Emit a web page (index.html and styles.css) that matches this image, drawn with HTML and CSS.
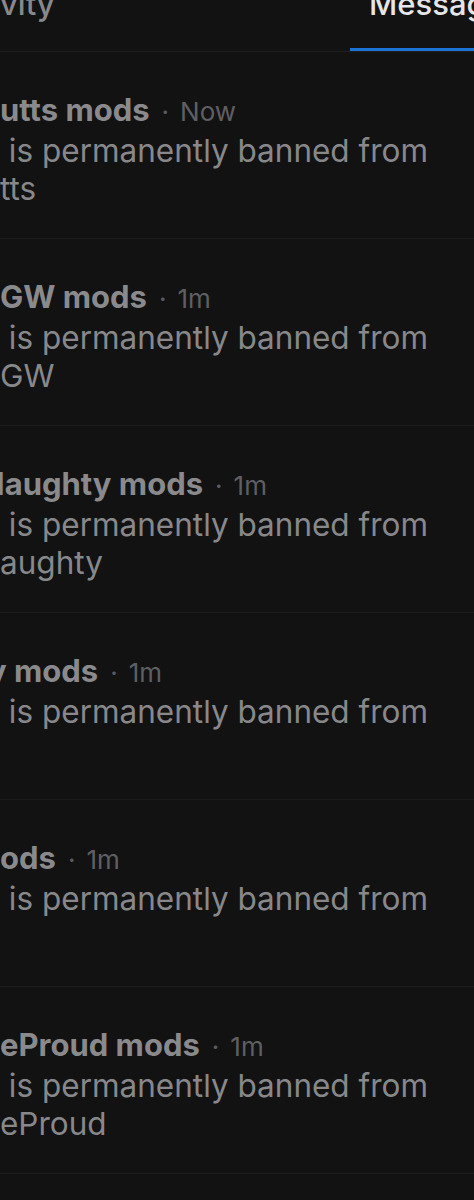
FILE: index.html
```html
<!DOCTYPE html>
<html lang="en">
<head>
    <meta charset="UTF-8">
    <meta name="viewport" content="width=device-width, initial-scale=1.0">
    <title>Inbox</title>
    <link rel="stylesheet" href="styles.css">
</head>
<body>
    <div class="inbox">
        <div class="tabs">
            <div class="tab">vity</div>
            <div class="tab active">Messages</div>
        </div>

        <div class="message">
            <div class="message-title"><span class="sender">utts mods</span><span class="dot">&middot;</span><span class="time">Now</span></div>
            <div class="message-body">&nbsp;is permanently banned from<br>tts</div>
        </div>

        <div class="message">
            <div class="message-title"><span class="sender">GW mods</span><span class="dot">&middot;</span><span class="time">1m</span></div>
            <div class="message-body">&nbsp;is permanently banned from<br>GW</div>
        </div>

        <div class="message">
            <div class="message-title"><span class="sender cut">Naughty mods</span><span class="dot">&middot;</span><span class="time">1m</span></div>
            <div class="message-body">&nbsp;is permanently banned from<br>aughty</div>
        </div>

        <div class="message">
            <div class="message-title"><span class="sender cut-y">y mods</span><span class="dot">&middot;</span><span class="time">1m</span></div>
            <div class="message-body">&nbsp;is permanently banned from</div>
        </div>

        <div class="message">
            <div class="message-title"><span class="sender">ods</span><span class="dot">&middot;</span><span class="time">1m</span></div>
            <div class="message-body">&nbsp;is permanently banned from</div>
        </div>

        <div class="message">
            <div class="message-title"><span class="sender">eProud mods</span><span class="dot">&middot;</span><span class="time">1m</span></div>
            <div class="message-body">&nbsp;is permanently banned from<br>eProud</div>
        </div>
    </div>
</body>
</html>
```

FILE: styles.css
```css
body {
    margin: 0;
    background: #121213;
    font-family: 'Inter', 'Roboto', sans-serif;
    color: #88888b;
    overflow: hidden;
}

.inbox {
    width: 474px;
    height: 1200px;
    overflow: hidden;
}

/* Tabs (page is scrolled so only the lower part shows) */
.tabs {
    display: flex;
    justify-content: space-between;
    align-items: flex-start;
    height: 51px;
    border-bottom: 1px solid #1f1f21;
}

.tab {
    font-size: 31px;
    line-height: 34px;
    color: #88888b;
    font-weight: 500;
    margin-top: -13px;
}

.tab.active {
    color: #e6e6e8;
    width: 124px;
    height: 64px;
    box-sizing: border-box;
    padding-left: 19px;
    white-space: nowrap;
    overflow: hidden;
    border-bottom: 3px solid #1d72d6;
}

.message {
    height: 187px;
    box-sizing: border-box;
    border-bottom: 1px solid #1c1c1e;
    padding-top: 38px;
    white-space: nowrap;
}

.message-title {
    font-size: 31px;
    line-height: 40px;
    display: flex;
    align-items: baseline;
}

.sender {
    font-weight: 700;
    color: #8a8a8d;
}

.sender.cut {
    margin-left: -19px;
}

.sender.cut-y {
    margin-left: -12px;
}

.dot {
    color: #5d5d60;
    font-size: 26px;
    margin: 0 11px 0 12px;
}

.time {
    font-size: 26px;
    color: #5f5f62;
}

.message-body {
    font-size: 31.5px;
    line-height: 38px;
    color: #88888b;
}
```
